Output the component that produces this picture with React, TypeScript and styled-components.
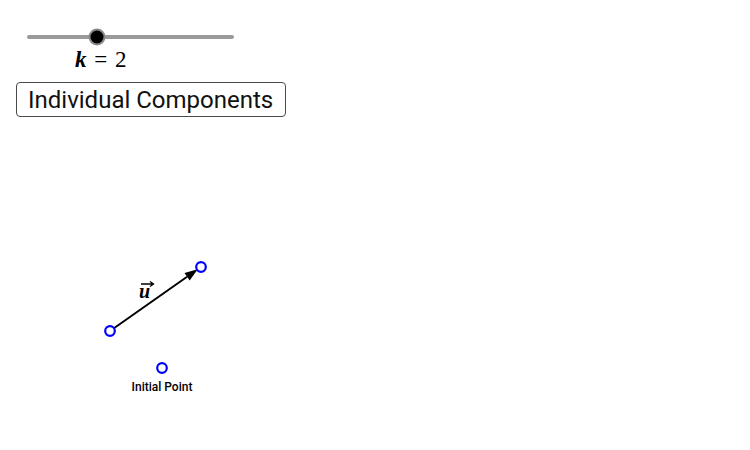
import styled, { createGlobalStyle } from "styled-components";
import { FC } from "react";

const GlobalStyle = createGlobalStyle`
  html, body {
    margin: 0;
    padding: 0;
    background: #ffffff;
  }
`;

const Applet = styled.div`
  position: relative;
  width: 750px;
  height: 450px;
  overflow: hidden;
  background: #ffffff;
`;

const Controls = styled.div`
  position: relative;
  z-index: 1;
  display: flex;
  flex-direction: column;
  align-items: flex-start;
  padding: 27px 0 0 16px;
`;

const SliderBox = styled.div`
  display: flex;
  flex-direction: column;
  align-items: flex-start;
  width: 230px;
`;

const SliderLabel = styled.div`
  margin-left: 59px;
  font-family: "Liberation Serif", "DejaVu Serif", serif;
  font-size: 23px;
  line-height: 22px;
  height: 23px;
  color: #000;
  word-spacing: 2px;

  b {
    font-style: italic;
    font-weight: bold;
  }
`;

const Button = styled.button`
  margin-top: 10px;
  box-sizing: border-box;
  width: 270px;
  height: 35px;
  padding: 0 0 0 11px;
  text-align: left;
  background: #ffffff;
  border: 1px solid #4a4a4a;
  border-radius: 4px;
  font-family: Roboto, "Liberation Sans", sans-serif;
  font-size: 24px;
  color: #111;
  cursor: pointer;
`;

const Drawing = styled.svg`
  position: absolute;
  inset: 0;
  width: 750px;
  height: 450px;
`;

const PointLabel = styled.text`
  font-family: Roboto, "Liberation Sans", sans-serif;
  font-size: 12px;
  font-weight: 500;
  fill: #000;
`;

const VecLabel = styled.text`
  font-family: "Liberation Serif", "DejaVu Serif", serif;
  font-size: 20px;
  font-style: italic;
  font-weight: bold;
  fill: #000;
`;

const Slider: FC = () => (
  <svg width="230" height="22" viewBox="0 0 230 22">
    <line x1="13" y1="10" x2="216" y2="10" stroke="#9a9a9a" strokeWidth="4" strokeLinecap="round" />
    <circle cx="81" cy="10" r="7.5" fill="#000" stroke="#8a8a8a" strokeWidth="2" />
  </svg>
);

const Point: FC<{ x: number; y: number }> = ({ x, y }) => (
  <circle cx={x} cy={y} r="4.8" fill="#ffffff" stroke="#0000ff" strokeWidth="2.2" />
);

const App: FC = () => {
  const from = { x: 110, y: 331 };
  const to = { x: 201, y: 267 };
  const dx = to.x - from.x;
  const dy = to.y - from.y;
  const len = Math.hypot(dx, dy);
  const ux = dx / len;
  const uy = dy / len;
  const tip = { x: to.x - ux * 4, y: to.y - uy * 4 };
  const base = { x: tip.x - ux * 13, y: tip.y - uy * 13 };
  const head = `${tip.x},${tip.y} ${base.x - uy * 4.5},${base.y + ux * 4.5} ${base.x + uy * 4.5},${base.y - ux * 4.5}`;

  return (
    <>
      <GlobalStyle />
      <Applet>
        <Drawing viewBox="0 0 750 450">
          <line x1={from.x} y1={from.y} x2={base.x} y2={base.y} stroke="#000" strokeWidth="2" />
          <polygon points={head} fill="#000" />
          <VecLabel x="139" y="298">u</VecLabel>
          <path d="M141 284 H153 M150 281.5 L153.5 284 L150 286.5" stroke="#000" strokeWidth="1.3" fill="none" />
          <Point x={from.x} y={from.y} />
          <Point x={to.x} y={to.y} />
          <Point x={162} y={368} />
          <PointLabel x="162" y="391" textAnchor="middle">Initial Point</PointLabel>
        </Drawing>
        <Controls>
          <SliderBox>
            <Slider />
            <SliderLabel>
              <b>k</b> = 2
            </SliderLabel>
          </SliderBox>
          <Button>Individual Components</Button>
        </Controls>
      </Applet>
    </>
  );
};

export default App;
